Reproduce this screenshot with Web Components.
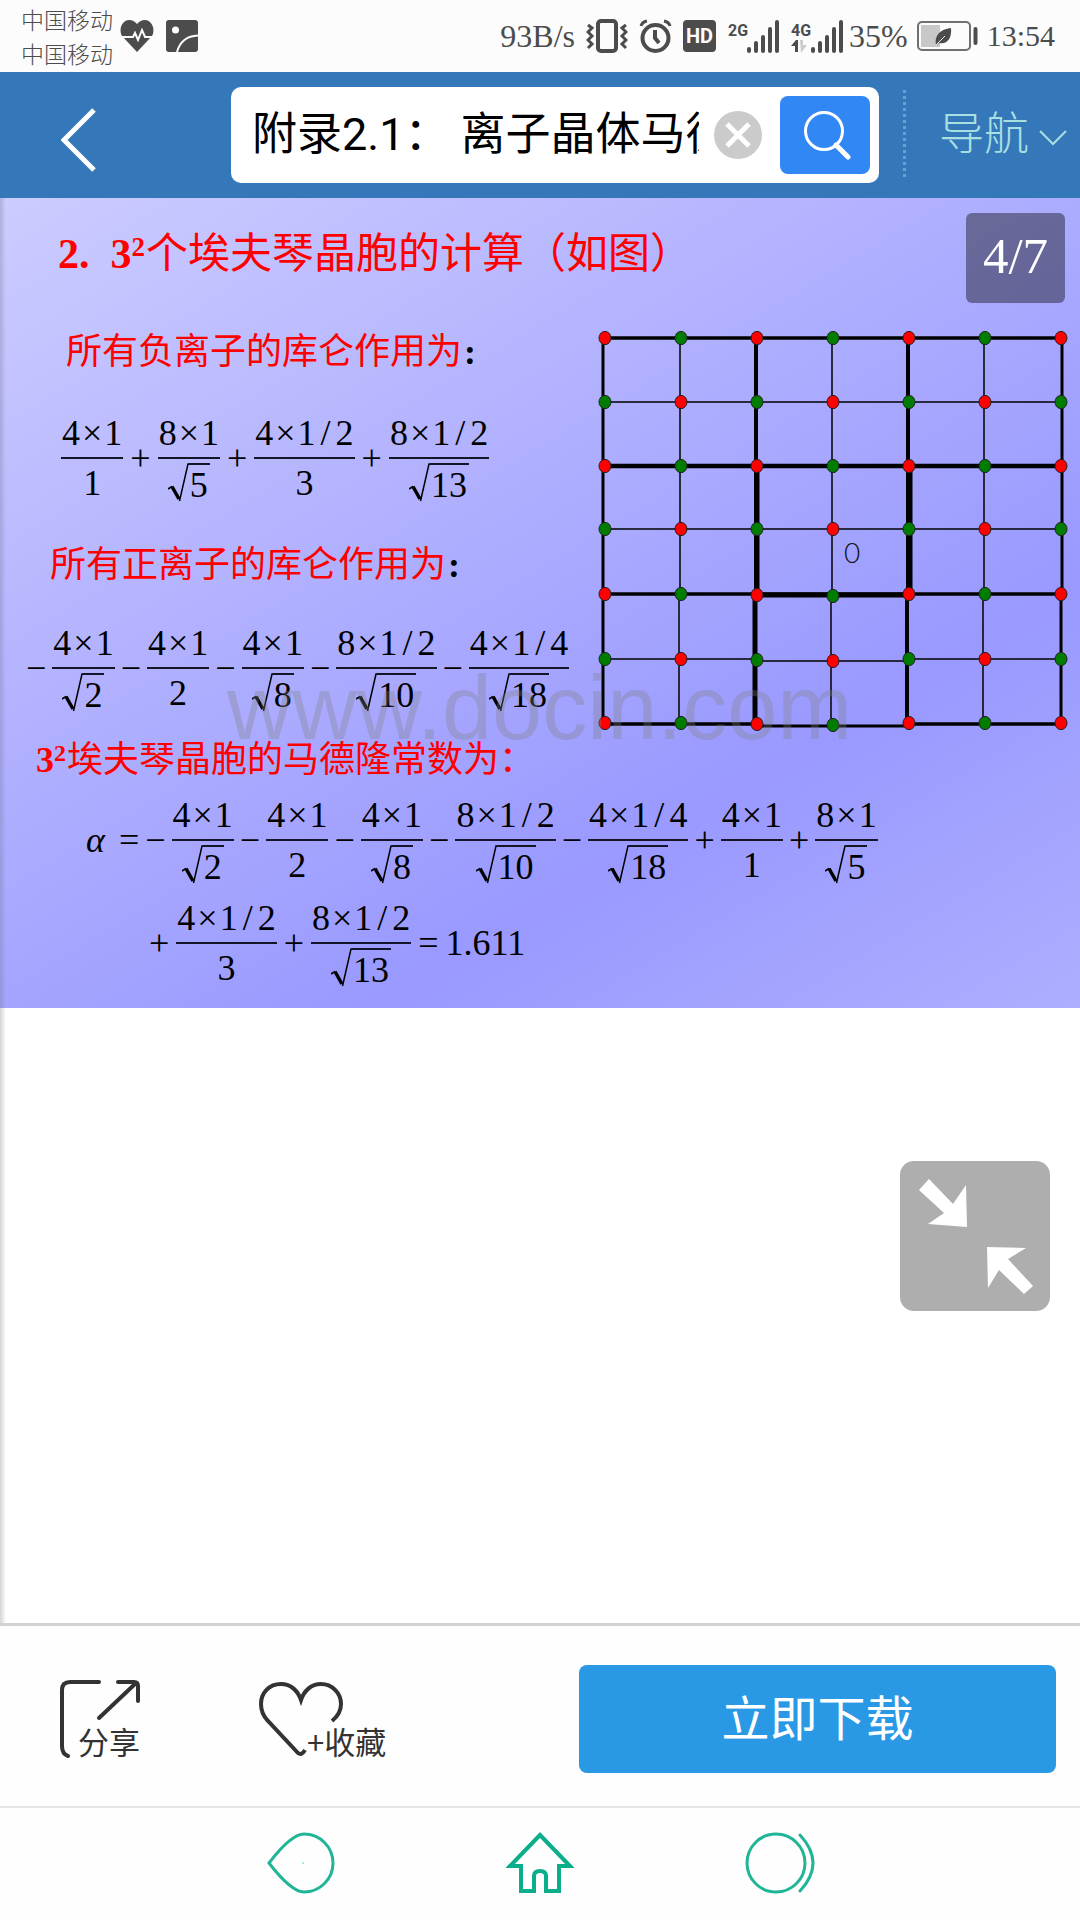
<!DOCTYPE html>
<html lang="zh-CN">
<head>
<meta charset="utf-8">
<meta name="viewport" content="width=device-width, initial-scale=1">
<title>附录2.1</title>
<style>
  html, body { margin: 0; }
  body {
    min-height: 100vh;
    display: flex;
    flex-direction: column;
    background: #fefefe;
    font-family: "Liberation Serif", "Noto Sans CJK SC", serif;
  }
  doc-viewer { flex: 1; }
</style>
</head>
<body>
<status-bar></status-bar>
<search-header></search-header>
<doc-viewer>
  <doc-slide></doc-slide>
</doc-viewer>
<action-bar></action-bar>
<system-nav></system-nav>

<script>
const define = (name, html) => {
  const template = document.createElement('template');
  template.innerHTML = html;
  customElements.define(name, class extends HTMLElement {
    constructor() {
      super();
      this.attachShadow({ mode: 'open' }).append(template.content.cloneNode(true));
    }
  });
};

/* Fraction: num over den; the root attribute puts the denominator under a radical. */
customElements.define('frac-term', class extends HTMLElement {
  connectedCallback() {
    const spaced = this.getAttribute('num')
      .replace('/', '<span class="slash">/</span>')
      .replace('×', '<span class="times">×</span>');
    const den = this.getAttribute('den');
    const lower = this.hasAttribute('root')
      ? `<span class="root"><svg width="21" height="40" viewBox="0 0 21 40" fill="none" stroke="#000">
           <path d="M0 26 4 23.500" stroke-width="1.500"/><path d="M4 23.500 11 36" stroke-width="3.500"/>
           <path d="M11.500 38 20 1H21" stroke-width="1.500"/></svg><span class="under">${den}</span></span>`
      : den;
    const root = this.shadowRoot || this.attachShadow({ mode: 'open' });
    root.innerHTML = `<style>
      :host { display: flex; flex-direction: column; align-items: stretch; text-align: center; line-height: 40px; }
      .num { padding: 0 1px 4px; white-space: nowrap; }
      .bar { height: 2px; background: #15152a; }
      .den { height: 40px; padding-top: 4px; display: flex; justify-content: center; }
      .times { margin: 0 2px; }
      .slash { margin: 0 5px; }
      .root { display: flex; align-items: flex-start; }
      .root svg { display: block; }
      .under { border-top: 2px solid #15152a; padding: 0 2px 0 1px; }
    </style><div class="num">${spaced}</div><div class="bar"></div><div class="den">${lower}</div>`;
  }
});

define('math-row', `<style>
  :host { display: flex; align-items: center; gap: 7px; font: 36px/40px "Liberation Serif", serif; color: #000; }
  ::slotted(span) { padding-bottom: 1px; }
</style><slot></slot>`);

define('status-bar', `<style>
  :host { display: flex; align-items: center; justify-content: space-between; height: 72px; padding: 0 25px 0 21px;
    background: #fcfcfc; color: #4c4c4c; font-size: 32px; line-height: 36px; }
  div { display: flex; align-items: center; gap: 11px; }
  svg { display: block; }
  .carriers { display: block; font: 300 23px/34px "Noto Sans CJK SC", sans-serif; }
  .left { gap: 7px; }
  .left svg + svg { margin-left: 5px; }
  .power { gap: 8px; margin-left: -2px; }
  .signal { gap: 5px; }
  time { font-size: 30px; }
</style>
<div class="left">
  <div class="carriers">中国移动<br>中国移动</div>
  <svg width="34" height="34" viewBox="0 0 34 34"><path d="M17 33 2 17C-2 9 3 1 9 1c4 0 6 2 8 4 2-2 4-4 8-4 6 0 11 8 7 16z" fill="#4c4c4c"/><path d="M0 18h13l2-4 3 7 4-10 3 7h9" fill="none" stroke="#fcfcfc" stroke-width="2"/></svg>
  <svg width="32" height="34" viewBox="0 0 32 34"><rect y="1" width="32" height="32" rx="3" fill="#4c4c4c"/><circle cx="9.500" cy="11" r="3.500" fill="#fcfcfc"/><path d="M11 33C14 22 21 17 32 16.500" fill="none" stroke="#fcfcfc" stroke-width="2"/></svg>
</div>
<div>
  <span>93B/s</span>
  <svg width="42" height="34" viewBox="0 0 42 34" fill="none" stroke="#4c4c4c"><rect x="12" y="2" width="18" height="30" rx="3" stroke-width="4"/><path d="M2 6l4 3-4 4 4 4-4 4 4 4-4 4M40 6l-4 3 4 4-4 4 4 4-4 4 4 4" stroke-width="3"/></svg>
  <svg width="33" height="34" viewBox="0 0 33 34" fill="none" stroke="#4c4c4c"><circle cx="16.500" cy="19" r="13" stroke-width="4"/><path d="M16 11v8l4 5" stroke-width="4"/><path d="M2 7Q3 3 8 2M31 7Q30 3 25 2" stroke-width="3"/></svg>
  <svg width="33" height="34" viewBox="0 0 33 34"><rect y="1" width="33" height="32" rx="4" fill="#4c4c4c"/><text x="16.500" y="24" text-anchor="middle" font-family="Roboto" font-weight="700" font-size="20" fill="#fcfcfc">HD</text></svg>
  <div class="signal">
    <svg width="58" height="36" viewBox="0 0 58 36" fill="none" stroke="#4c4c4c" stroke-width="4" stroke-linecap="round"><path d="M22 31v2M29 25v8M36 19v14M43 11v22M50 4v29"/><text x="1" y="18" font-family="Roboto" font-weight="700" font-size="16" fill="#4c4c4c" stroke="none">2G</text></svg>
    <svg width="54" height="36" viewBox="0 0 54 36" fill="none" stroke="#4c4c4c" stroke-width="4" stroke-linecap="round"><path d="M23 31v2M30 25v8M37 19v14M44 11v22M51 4v29"/><text x="1" y="18" font-family="Roboto" font-weight="700" font-size="16" fill="#4c4c4c" stroke="none">4G</text><path d="M1 28 6 22H8V34H5V28z" fill="#4c4c4c" stroke="none"/><path d="M10 22h3v5h4l-6 8z" fill="#ccc" stroke="none"/></svg>
    <span>35%</span>
  </div>
  <div class="power">
    <svg width="62" height="30" viewBox="0 0 62 30"><rect x="1" y="1" width="52" height="28" rx="4" fill="none" stroke="#707070" stroke-width="2"/><rect x="4" y="4" width="19" height="22" fill="#c8c8c8"/><path d="M19 24C17 15 23 8 34 7c1 9-3 17-12 15l-2 2z" fill="#4c4c4c"/><path d="M19 24 28 15" stroke="#eee"/><path d="M58.500 8v14" stroke="#4c4c4c" stroke-width="4" stroke-linecap="round"/></svg>
    <time>13:54</time>
  </div>
</div>`);

define('search-header', `<style>
  :host { display: flex; align-items: center; height: 126px; padding-right: 13px; background: #3478b9;
    font: 400 45px/54px Roboto, "Noto Sans CJK SC", sans-serif; }
  button { border: 0; padding: 0; background: none; font: inherit; color: inherit; display: flex; align-items: center; justify-content: center; }
  svg { display: block; }
  .back { width: 158px; height: 96px; margin-right: 73px; padding-top: 10px; box-sizing: border-box; }
  form { flex: 1; min-width: 0; display: flex; align-items: center; height: 96px; box-sizing: border-box; padding: 9px 9px 9px 21px; border-radius: 10px; background: #fff; }
  input { flex: 1; min-width: 0; border: 0; padding: 0; margin-right: 15px; height: 60px; outline: 0; background: none; color: #000;
    font: 400 45px/60px Roboto, "Noto Sans CJK SC", sans-serif; }
  .clear { width: 48px; height: 48px; border-radius: 50%; background: #cbcbcb; margin-right: 18px; }
  .go { width: 90px; height: 78px; border-radius: 8px; background: #3187f4; padding-left: 6px; }
  .dots { width: 3px; height: 90px; margin: 0 33px 0 24px; background: repeating-linear-gradient(#6a9fd2 0 3px, transparent 3px 6px); }
  .nav { gap: 10px; color: #a8dfe2; font-weight: 300; }
  .nav svg { margin-top: 6px; }
</style>
<button class="back" aria-label="返回"><svg width="36" height="66" viewBox="0 0 36 66"><path d="M33 3 3 33 33 63" fill="none" stroke="#fff" stroke-width="5"/></svg></button>
<form role="search" onsubmit="return false">
  <input type="text" aria-label="搜索" value="附录2.1： 离子晶体马德隆常数">
  <button class="clear" type="button" aria-label="清除"><svg width="28" height="28" viewBox="0 0 28 28"><path d="M3 3 25 25M25 3 3 25" stroke="#fff" stroke-width="5"/></svg></button>
  <button class="go" aria-label="搜索"><svg width="48" height="50" viewBox="0 0 48 50" fill="none" stroke="#fff"><circle cx="20" cy="21" r="18.500" stroke-width="3"/><path d="M32 35 44 47" stroke-width="5" stroke-linecap="round"/></svg></button>
</form>
<span class="dots"></span>
<button class="nav">导航<svg width="28" height="16" viewBox="0 0 28 16"><path d="M1 1 14 14 27 1" fill="none" stroke="#a8dfe2" stroke-width="2"/></svg></button>`);

define('doc-viewer', `<style>
  :host { display: block; position: relative; background: linear-gradient(90deg, #d4d4d4, #fff 6px); }
  button { position: absolute; right: 30px; top: 963px; width: 150px; height: 150px; padding: 0; border: 0; border-radius: 14px; background: #aeaeae; }
  svg { display: block; }
</style>
<slot></slot>
<button aria-label="退出全屏"><svg width="150" height="150" viewBox="0 0 150 150" fill="#fff"><path d="M29 18 19 29 44 52 28 63 67 66 66 24 53 43zM87 86 126 87 108 98 133 125 124 133 99 109 88 127z"/></svg></button>`);

customElements.define('ion-lattice', class extends HTMLElement {
  connectedCallback() {
    const xs = [9, 85, 161, 237, 313, 389, 465];
    const ys = [12, 76, 140, 203, 268, 333, 397];
    const line = (x1, y1, x2, y2, w) => `<path d="M${x1} ${y1}L${x2} ${y2}" stroke-width="${w}"/>`;
    let lines = '';
    [3.5, 1.5, 4.5, 1.5, 3.5, 1.5, 3.5].forEach((w, i) => {
      if (i === 5) lines += line(8, 333, 160, 333, w) + line(160, 335, 312, 335, w) + line(312, 333, 465, 333, w);
      else if (i === 6) lines += line(8, 398, 160, 398, w) + line(160, 400, 312, 400, 3) + line(312, 398, 465, 398, w);
      else lines += line(7, ys[i], 466, ys[i], w);
    });
    [3, 1.5, 4, 1.5, 4, 1.5, 3].forEach((w, i) => {
      const x = i ? (i === 6 ? 466 : xs[i] - 1) : 7;
      lines += line(x, 12, x, 268, w) + line(i ? x - 1 : x, 268, i ? x - 1 : x, 398, w);
    });
    lines += line(161, 140, 161, 269, 5) + line(314, 140, 314, 269, 5) + line(160, 269, 314, 269, 5) + line(159, 269, 159, 398, 5);
    let dots = '';
    ys.forEach((y, r) => xs.forEach((x, c) => {
      const dy = c === 3 && r > 3 ? 2 : (c === 2 && r > 3 ? 1 : 0);
      dots += `<ellipse cx="${x}" cy="${y + dy}" rx="6" ry="6.6" fill="${(r + c) % 2 ? '#007c00' : '#f00'}"/>`;
    }));
    const root = this.shadowRoot || this.attachShadow({ mode: 'open' });
    root.innerHTML = `<style>:host { display: block; } svg { display: block; }</style>
      <svg width="475" height="408" viewBox="0 0 475 408"><g stroke="#000" fill="none">${lines}</g><g stroke="#222" stroke-width="1">${dots}</g>
      <text x="256" y="237" text-anchor="middle" font-family="Lato" font-weight="300" font-size="28" fill="#111">0</text></svg>`;
  }
});

define('doc-slide', `<style>
  :host { display: block; position: relative; box-sizing: border-box; padding: 26px 9px 20px 26px;
    background: linear-gradient(90deg, rgba(110,110,140,.3), rgba(160,160,200,0) 6px),
      linear-gradient(149deg, #ccccff, #9999ff 71%, #aeaeff); }
  h1, h2 { margin: 0; padding-top: 2px; font-family: "Liberation Serif", "Noto Sans CJK SC", serif; font-weight: 400; color: #f00; white-space: nowrap; }
  h1 { font-size: 42px; line-height: 56px; padding-left: 32px; }
  h2 { font-size: 36px; line-height: 48px; }
  b { font-family: "Liberation Serif", serif; }
  sup { font-size: 27px; line-height: 1px; vertical-align: 12px; margin-right: 1px; }
  h2 sup { font-size: 24px; vertical-align: 11px; }
  .colon { color: #000; margin-left: 2px; }
  .upper { display: flex; justify-content: space-between; margin-top: 44px; }
  .anions { padding-left: 40px; }
  .cations { padding-left: 24px; }
  .total { padding-left: 10px; }
  .f1 { margin: 37px 0 36px; padding-left: 35px; }
  .f2 { margin-top: 34px; }
  .f3 { margin: 11px 0 13px; padding-left: 60px; }
  .f2, .f3 { gap: 6px; }
  .f4 { padding-left: 123px; }
  i { padding-right: 8px; }
  .page { position: absolute; right: 15px; top: 15px; width: 99px; height: 90px; border-radius: 6px; background: rgba(0,0,0,.4); color: #fff;
    font-size: 51px; line-height: 86px; text-align: center; }
  .mark { position: absolute; left: 227px; top: 465px; font: 90px/90px "Liberation Sans", sans-serif; color: rgba(128,128,128,.32); pointer-events: none; }
</style>
<h1><b>2.&nbsp; 3<sup>2</sup></b>个埃夫琴晶胞的计算（如图）</h1>
<div class="upper">
  <div>
    <h2 class="anions">所有负离子的库仑作用为<b class="colon">:</b></h2>
    <math-row class="f1"><frac-term num="4×1" den="1"></frac-term><span>+</span><frac-term num="8×1" den="5" root></frac-term><span>+</span><frac-term num="4×1/2" den="3"></frac-term><span>+</span><frac-term num="8×1/2" den="13" root></frac-term></math-row>
    <h2 class="cations">所有正离子的库仑作用为<b class="colon">:</b></h2>
    <math-row class="f2"><span>−</span><frac-term num="4×1" den="2" root></frac-term><span>−</span><frac-term num="4×1" den="2"></frac-term><span>−</span><frac-term num="4×1" den="8" root></frac-term><span>−</span><frac-term num="8×1/2" den="10" root></frac-term><span>−</span><frac-term num="4×1/4" den="18" root></frac-term></math-row>
  </div>
  <ion-lattice></ion-lattice>
</div>
<h2 class="total"><b>3<sup>2</sup></b>埃夫琴晶胞的马德隆常数为：</h2>
<math-row class="f3"><span><i>α</i></span><span>=</span><span>−</span><frac-term num="4×1" den="2" root></frac-term><span>−</span><frac-term num="4×1" den="2"></frac-term><span>−</span><frac-term num="4×1" den="8" root></frac-term><span>−</span><frac-term num="8×1/2" den="10" root></frac-term><span>−</span><frac-term num="4×1/4" den="18" root></frac-term><span>+</span><frac-term num="4×1" den="1"></frac-term><span>+</span><frac-term num="8×1" den="5" root></frac-term></math-row>
<math-row class="f4"><span>+</span><frac-term num="4×1/2" den="3"></frac-term><span>+</span><frac-term num="8×1/2" den="13" root></frac-term><span>=</span><span>1.611</span></math-row>
<div class="mark">www.docin.com</div>
<div class="page">4/7</div>`);

define('action-bar', `<style>
  :host { display: flex; align-items: center; height: 174px; padding: 6px 24px 0 60px; border-top: 3px solid #d2d2d2; background: #fefefe;
    font-family: "Noto Sans CJK SC", sans-serif; }
  button { border: 0; padding: 0; background: none; font: 31px/36px "Noto Sans CJK SC", sans-serif; color: #333; text-align: left; }
  .tool { display: grid; height: 80px; }
  .tool > * { grid-area: 1 / 1; }
  .tool span { align-self: end; }
  .share { width: 82px; margin-right: 117px; }
  .share span { padding-left: 18px; }
  .fav { width: 130px; }
  .fav span { padding-left: 48px; }
  svg { display: block; }
  .get { flex: 1; max-width: 477px; margin-left: auto; height: 108px; padding-bottom: 8px; border-radius: 8px; background: #2999e6; color: #fff;
    font-size: 48px; line-height: 60px; text-align: center; }
</style>
<button class="tool share"><svg width="82" height="80" viewBox="0 0 82 80" fill="none" stroke="#333" stroke-width="4" stroke-linecap="round"><path d="M39 3H10Q2 3 2 11V67Q2 75 8 77M58 3H74Q78 3 78 7V22M39 39 75 5"/></svg><span>分享</span></button>
<button class="tool fav"><svg width="90" height="80" viewBox="0 0 90 80" fill="none" stroke="#333" stroke-width="4"><path d="M73 42C78 38 82 32 82 25 82 14 73 5 62 5 52 5 45 12 42 21 39 12 32 5 22 5 10 5 2 14 2 25 2 32 5 38 9 42L38 73Q42 78 46 71"/></svg><span>+收藏</span></button>
<button class="get">立即下载</button>`);

define('system-nav', `<style>
  :host { display: flex; justify-content: center; align-items: center; gap: 171px; height: 112px; padding-left: 4px; border-top: 2px solid #e6e6e6; background: #fefefe; }
  button { border: 0; padding: 0; background: none; }
  svg { display: block; }
</style>
<button aria-label="返回"><svg width="68" height="66" viewBox="0 0 68 66" fill="none" stroke="#20b596" stroke-width="3"><path d="M2 32C12 19 26 3 37 3 53 3 66 16 66 32S53 61 37 61C26 61 12 45 2 32z"/><circle cx="36" cy="32" r=".5" stroke-width="1" opacity=".5"/></svg></button>
<button aria-label="主屏幕"><svg width="68" height="66" viewBox="0 0 68 66" fill="none" stroke="#0bae8b" stroke-width="4"><path d="M34 4 4 35H15V60H28V45Q28 40 34 40T40 45V60H53V35H64z"/></svg></button>
<button aria-label="最近任务"><svg width="72" height="66" viewBox="0 0 72 66" fill="none" stroke="#20b596" stroke-width="3" stroke-linecap="round"><circle cx="31" cy="32" r="29"/><path d="M55 4Q81 32 55 60"/></svg></button>`);
</script>
</body>
</html>
